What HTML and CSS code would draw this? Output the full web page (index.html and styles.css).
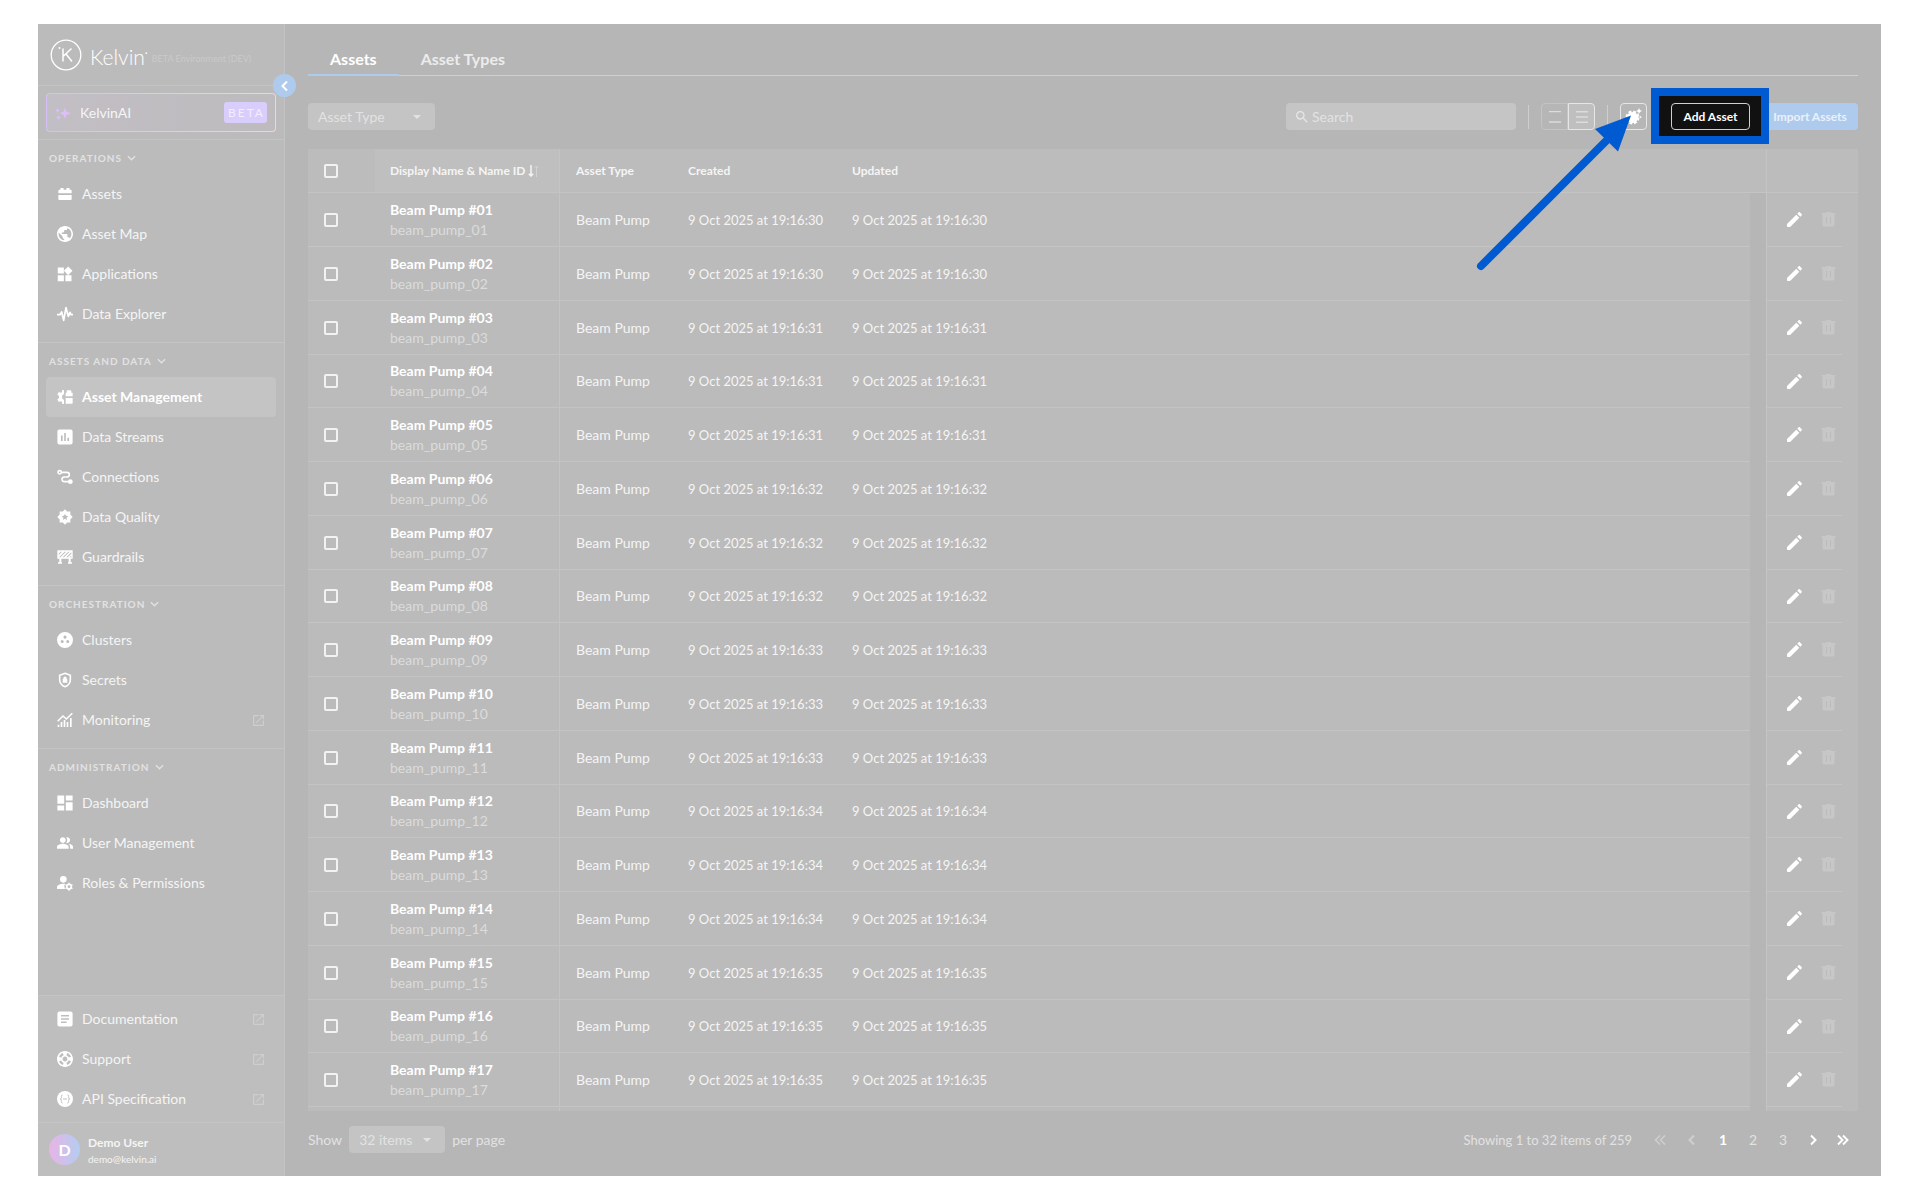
FILE: index.html
```html
<!DOCTYPE html>
<html lang="en">
<head>
  <meta charset="UTF-8" />
  <meta name="viewport" content="width=device-width, initial-scale=1" />
  <title>Kelvin - Assets</title>
  <link rel="stylesheet" href="styles.css">
</head>
<body>
  <svg class="sprite" aria-hidden="true">
    <symbol id="i-assets" viewBox="0 0 24 24"><path d="M2 11V7a1.500 1.500 0 0 1 1.500-1.500H5V4a1 1 0 0 1 1-1h3a1 1 0 0 1 1 1v1.500h4V4a1 1 0 0 1 1-1h3a1 1 0 0 1 1 1v1.500h1.500A1.500 1.500 0 0 1 22 7v4zM2 13.500h20v6a1.500 1.500 0 0 1-1.500 1.500h-17A1.500 1.500 0 0 1 2 19.500z"/></symbol>
    <symbol id="i-globe" viewBox="2 2 20 20"><path d="M12 2C6.480 2 2 6.480 2 12s4.480 10 10 10 10-4.480 10-10S17.520 2 12 2zm-1 17.930c-3.950-.49-7-3.850-7-7.930 0-.62.08-1.210.21-1.790L9 15v1c0 1.100.9 2 2 2v1.930zm6.900-2.540c-.26-.81-1-1.390-1.900-1.390h-1v-3c0-.55-.45-1-1-1H8v-2h2c.55 0 1-.45 1-1V7h2c1.100 0 2-.9 2-2v-.41c2.930 1.190 5 4.060 5 7.410 0 2.080-.8 3.970-2.100 5.390z"/></symbol>
    <symbol id="i-widgets" viewBox="2 1 21 21"><path d="M13 13v8h8v-8h-8zM3 21h8v-8H3v8zM3 3v8h8V3H3zm13.660-1.310L11 7.340 16.660 13l5.660-5.660-5.660-5.650z"/></symbol>
    <symbol id="i-pulse" viewBox="0 0 24 24"><path d="M0 13h4.500l2.500-4L10 21.500l3.500-19 3.500 13 2.500-6L21 13H24" fill="none" stroke="currentColor" stroke-width="2.600" stroke-linejoin="round"/></symbol>
    <symbol id="i-manage" viewBox="0 0 24 24"><path d="M10.500 1.500v6a4.800 4.800 0 0 0 0 9v6H8l-.7-3.200-1.500-.8-3 1L.5 15.700 3 13.500v-3L.5 8.300l2.300-3.800 3 1 1.500-.8L8 1.500zM13 11V5.500h1.500V3.200a1.200 1.200 0 0 1 1.200-1.200h4.600a1.200 1.200 0 0 1 1.200 1.200v2.300H23.500V11zM13 13.500h10.500V21a1 1 0 0 1-1 1H13z"/></symbol>
    <symbol id="i-chart" viewBox="2 2 20 20"><path d="M19 2.500H5A2.500 2.500 0 0 0 2.500 5v14A2.500 2.500 0 0 0 5 21.500h14a2.500 2.500 0 0 0 2.500-2.500V5A2.500 2.500 0 0 0 19 2.500zM9 17H7v-7h2v7zm4 0h-2V7h2v10zm4 0h-2v-4h2v4z"/></symbol>
    <symbol id="i-route" viewBox="0 0 24 24"><g fill="none" stroke="currentColor" stroke-width="2.400"><circle cx="4" cy="5" r="2.500"/><path d="M6.500 5H15a3.500 3.500 0 0 1 0 7h-4a3.500 3.500 0 0 0 0 7h7"/></g><circle cx="20" cy="19" r="3.600"/></symbol>
    <symbol id="i-quality" viewBox="0 0 24 24"><path fill-rule="evenodd" d="M12 .5l3.200 3.200H20v4.500l3.500 3.800-3.500 3.800v4.500h-4.800L12 23.500l-3.200-3.200H4v-4.500L.5 12 4 8.200V3.700h4.800zM12 7l-1.400 3.300-3.600.3 2.700 2.400-.8 3.500L12 14.600l3.100 1.900-.8-3.500 2.700-2.400-3.600-.3z"/></symbol>
    <symbol id="i-guard" viewBox="0 0 24 24"><path fill-rule="evenodd" d="M.5 2h23v12.500h-3V20h2v2h-6v-2h1v-5.500h-11V20h1v2h-6v-2h2v-5.500h-3zM2.500 9l5-5h-2l-3 3zM3 12.500h2L13.500 4h-2zM8.500 12.500h2L19 4h-2zM14 12.500h2l5.500-5.500V5zM19 12.500h2.500V10z"/></symbol>
    <symbol id="i-cluster" viewBox="2 2 20 20"><path fill-rule="evenodd" d="M12 2a10 10 0 1 0 0 20 10 10 0 0 0 0-20zM8.500 15.700a1.900 1.900 0 1 1 0-3.800 1.900 1.900 0 0 1 0 3.800zM12 10.300a1.900 1.900 0 1 1 0-3.800 1.900 1.900 0 0 1 0 3.800zM15.500 15.700a1.900 1.900 0 1 1 0-3.800 1.900 1.900 0 0 1 0 3.800z"/></symbol>
    <symbol id="i-shield" viewBox="1 0 22 24"><path d="M12 2l8 3v6.500c0 5-3.300 8.700-8 10.500-4.700-1.800-8-5.500-8-10.500V5z" fill="none" stroke="currentColor" stroke-width="2.400"/><path d="M8.500 10.500h1V9.300a2.500 2.500 0 0 1 5 0v1.200h1V16h-7z"/></symbol>
    <symbol id="i-monitor" viewBox="0 0 24 24"><path d="M1 14l8-8 5 4.500L23 2" fill="none" stroke="currentColor" stroke-width="2.200"/><path d="M1 19h2.500v3.500H1zM5.500 15H8v7.500H5.500zM10 12h2.500v10.500H10zM14.500 15H17v7.500h-2.500zM19.500 9H22v13.500h-2.500z"/></symbol>
    <symbol id="i-dash" viewBox="2 2 20 20"><path d="M2.500 13h8.500V2.500H2.500V13zm0 8.500h8.500V15H2.500v6.500zm10.500 0h8.500V11H13v10.500zm0-19V9h8.500V2.500H13z"/></symbol>
    <symbol id="i-users" viewBox="1 1 22 22"><path d="M16.670 13.130C18.040 14.060 19 15.320 19 17v3h4v-3c0-2.180-3.570-3.470-6.330-3.870zM15 12c2.210 0 4-1.790 4-4s-1.790-4-4-4c-.47 0-.91.1-1.330.24C14.500 5.270 15 6.580 15 8s-.5 2.730-1.330 3.760c.42.14.86.24 1.330.24zM9 12c2.210 0 4-1.790 4-4s-1.790-4-4-4-4 1.790-4 4 1.790 4 4 4zm0 1c-2.670 0-8 1.340-8 4v3h16v-3c0-2.660-5.330-4-8-4z"/></symbol>
    <symbol id="i-roles" viewBox="0 0 24 24"><circle cx="9.500" cy="6.500" r="5"/><path d="M0 21v-3c0-3 5-5 10-5 .8 0 1.500 0 2.200.1A7 7 0 0 0 12 21z"/><circle cx="18" cy="17.500" r="3.400" fill="none" stroke="currentColor" stroke-width="2.600"/><path d="M18 11.500v12M12.800 14.500l10.400 6M12.800 20.500l10.400-6" stroke="currentColor" stroke-width="2" stroke-dasharray="2.500 7 2.500"/></symbol>
    <symbol id="i-doc" viewBox="2 2 20 20"><path d="M19 2.500H5A2.500 2.500 0 0 0 2.500 5v14A2.500 2.500 0 0 0 5 21.500h14a2.500 2.500 0 0 0 2.500-2.500V5A2.500 2.500 0 0 0 19 2.500zM14 17H7v-2h7v2zm3-4H7v-2h10v2zm0-4H7V7h10v2z"/></symbol>
    <symbol id="i-support" viewBox="2 2 20 20"><path d="M12 2C6.480 2 2 6.480 2 12s4.480 10 10 10 10-4.480 10-10S17.520 2 12 2zm7.460 7.120l-2.780 1.150c-.51-1.360-1.580-2.440-2.950-2.940l1.150-2.780c2.100.8 3.770 2.470 4.580 4.570zM12 15c-1.660 0-3-1.340-3-3s1.340-3 3-3 3 1.340 3 3-1.340 3-3 3zM9.130 4.540l1.170 2.780c-1.380.5-2.470 1.590-2.980 2.970L4.540 9.130c.81-2.110 2.480-3.780 4.590-4.590zM4.540 14.870l2.780-1.150c.51 1.380 1.590 2.460 2.970 2.960l-1.170 2.780c-2.100-.81-3.770-2.480-4.580-4.590zm10.340 4.590l-1.150-2.780c1.370-.51 2.450-1.590 2.950-2.970l2.780 1.170c-.81 2.100-2.480 3.770-4.580 4.580z"/></symbol>
    <symbol id="i-api" viewBox="2 2 20 20"><circle cx="12" cy="12" r="10"/><path d="M9 7c-2 0-1.500 1.500-1.500 3S7 12 6 12c1 0 1.500.5 1.500 2S7 17 9 17M15 7c2 0 1.500 1.500 1.500 3s.5 2 1.500 2c-1 0-1.500.5-1.500 2s.5 3-1.500 3M9.500 12h5" fill="none" stroke="#bdbdbd" stroke-width="1.200"/></symbol>
    <symbol id="i-ext" viewBox="3 3 18 18"><path d="M19 19H5V5h7V3H5a2 2 0 0 0-2 2v14a2 2 0 0 0 2 2h14c1.100 0 2-.9 2-2v-7h-2v7zM14 3v2h3.590l-9.830 9.830 1.410 1.410L19 6.410V10h2V3h-7z"/></symbol>
    <symbol id="i-down" viewBox="0 0 10 6"><path d="M1 1l4 4 4-4" fill="none" stroke="currentColor" stroke-width="1.500"/></symbol>
    <symbol id="i-caret" viewBox="0 0 10 5"><path d="M0 0h10L5 5z"/></symbol>
    <symbol id="i-left" viewBox="0 0 12 12"><path d="M8 1.500L3.500 6 8 10.500" fill="none" stroke="currentColor" stroke-width="2"/></symbol>
    <symbol id="i-first" viewBox="0 0 12 12"><path d="M6 1.500L1.500 6 6 10.500M11 1.500L6.500 6l4.500 4.500" fill="none" stroke="currentColor" stroke-width="1.500"/></symbol>
    <symbol id="i-right" viewBox="0 0 12 12"><path d="M4 1.500L8.500 6 4 10.500" fill="none" stroke="currentColor" stroke-width="2"/></symbol>
    <symbol id="i-last" viewBox="0 0 12 12"><path d="M1 1.500L5.500 6 1 10.500M6 1.500L10.500 6 6 10.500" fill="none" stroke="currentColor" stroke-width="1.900"/></symbol>
    <symbol id="i-spark" viewBox="0 0 16 16"><path d="M10 2.500l1.500 4 4.500 1.700-4.500 1.700-1.500 4-1.500-4L4.500 8.200l4-1.700zM2.500 3l.8 1.700L5 5.500l-1.700.7-.8 1.800-.8-1.800L0 5.500l1.700-.8zM3.500 10l.8 1.700 1.700.8-1.700.7-.8 1.800-.8-1.800-1.700-.7 1.700-.8z"/></symbol>
    <symbol id="i-search" viewBox="3 3 18 18"><path d="M15.500 14h-.79l-.28-.27A6.470 6.470 0 0 0 16 9.500 6.500 6.500 0 1 0 9.500 16c1.610 0 3.090-.59 4.230-1.570l.27.28v.79l5 4.990L20.490 19l-4.990-5zm-6 0C7.010 14 5 11.990 5 9.500S7.010 5 9.500 5 14 7.010 14 9.500 11.990 14 9.500 14z"/></symbol>
    <symbol id="i-two" viewBox="0 0 12 12"><path d="M0 .5h12M0 11h12" stroke="currentColor" stroke-width="1.500"/></symbol>
    <symbol id="i-three" viewBox="0 0 12 12"><path d="M0 .8h12M0 6h12M0 11.200h12" stroke="currentColor" stroke-width="1.500"/></symbol>
    <symbol id="i-gear" viewBox="0 0 17 17"><circle cx="7.500" cy="9.500" r="5.500"/><circle cx="7.500" cy="9.500" r="5.800" fill="none" stroke="currentColor" stroke-width="2.400" stroke-dasharray="2.800 1.755"/><path d="M14 0l.9 2.100 2.100.9-2.100.9L14 6l-.9-2.100L11 3l2.100-.9zM15.500 7.500l.5 1.200 1 .3-1 .5-.5 1-.5-1-1-.5 1-.3z"/></symbol>
    <symbol id="i-sort" viewBox="0 0 11 12"><path d="M3 0v11M.8 8.800L3 11l2.200-2.200" fill="none" stroke="currentColor" stroke-width="1.500"/><path d="M8.500 12V1M6.500 3l2-2 2 2" fill="none" stroke="#d2d2d2"/></symbol>
    <symbol id="i-edit" viewBox="3 3 18 18"><path d="M3 17.300V20q0 1 1 1h2.700L17.800 9.900l-3.700-3.700zM20.700 7c.4-.4.4-1 0-1.400l-2.300-2.300c-.4-.4-1-.4-1.400 0l-1.700 1.700 3.700 3.700z"/></symbol>
    <symbol id="i-trash" viewBox="0 0 14 15"><path fill-rule="evenodd" d="M0 1h4l1-1h4l1 1h4v1.500h-1V13a1.500 1.500 0 0 1-1.500 1.500h-9A1.500 1.500 0 0 1 1 13V2.500H0zM4.500 5v6.500h1V5zM8.500 5v6.500h1V5z"/></symbol>
  </svg>

  <div class="app">
    <aside class="sidebar">
      <div class="brand">
        <svg class="brand-mark" viewBox="0 0 32 32"><g fill="none" stroke="#fff"><circle cx="16" cy="16" r="14.800" stroke-width="1.300"/><path d="M13 9.500v13M21.500 9.500L13 17.500M16 15l6 7.500" stroke-width="1.500"/></g><circle cx="9.500" cy="9" r="1" fill="#fff"/></svg>
        <span class="brand-name">Kelvin<sup>•</sup></span>
        <span class="brand-env">BETA Environment (DEV)</span>
      </div>
      <div class="ai">
        <a class="ai-link" href="#"><svg class="icon"><use href="#i-spark"/></svg><span>KelvinAI</span><b class="beta">BETA</b></a>
      </div>

      <nav class="menu">
        <section class="group">
          <button class="group-title">OPERATIONS <svg><use href="#i-down"/></svg></button>
          <a class="item" href="#"><svg class="icon"><use href="#i-assets"/></svg><span>Assets</span></a>
          <a class="item" href="#"><svg class="icon"><use href="#i-globe"/></svg><span>Asset Map</span></a>
          <a class="item" href="#"><svg class="icon"><use href="#i-widgets"/></svg><span>Applications</span></a>
          <a class="item" href="#"><svg class="icon"><use href="#i-pulse"/></svg><span>Data Explorer</span></a>
        </section>
        <section class="group">
          <button class="group-title">ASSETS AND DATA <svg><use href="#i-down"/></svg></button>
          <a class="item active" href="#"><svg class="icon"><use href="#i-manage"/></svg><span>Asset Management</span></a>
          <a class="item" href="#"><svg class="icon"><use href="#i-chart"/></svg><span>Data Streams</span></a>
          <a class="item" href="#"><svg class="icon"><use href="#i-route"/></svg><span>Connections</span></a>
          <a class="item" href="#"><svg class="icon"><use href="#i-quality"/></svg><span>Data Quality</span></a>
          <a class="item" href="#"><svg class="icon"><use href="#i-guard"/></svg><span>Guardrails</span></a>
        </section>
        <section class="group">
          <button class="group-title">ORCHESTRATION <svg><use href="#i-down"/></svg></button>
          <a class="item" href="#"><svg class="icon"><use href="#i-cluster"/></svg><span>Clusters</span></a>
          <a class="item" href="#"><svg class="icon"><use href="#i-shield"/></svg><span>Secrets</span></a>
          <a class="item" href="#"><svg class="icon"><use href="#i-monitor"/></svg><span>Monitoring</span><svg class="ext"><use href="#i-ext"/></svg></a>
        </section>
        <section class="group">
          <button class="group-title">ADMINISTRATION <svg><use href="#i-down"/></svg></button>
          <a class="item" href="#"><svg class="icon"><use href="#i-dash"/></svg><span>Dashboard</span></a>
          <a class="item" href="#"><svg class="icon"><use href="#i-users"/></svg><span>User Management</span></a>
          <a class="item" href="#"><svg class="icon"><use href="#i-roles"/></svg><span>Roles &amp; Permissions</span></a>
        </section>
      </nav>

      <div class="help">
        <a class="item" href="#"><svg class="icon"><use href="#i-doc"/></svg><span>Documentation</span><svg class="ext"><use href="#i-ext"/></svg></a>
        <a class="item" href="#"><svg class="icon"><use href="#i-support"/></svg><span>Support</span><svg class="ext"><use href="#i-ext"/></svg></a>
        <a class="item" href="#"><svg class="icon"><use href="#i-api"/></svg><span>API Specification</span><svg class="ext"><use href="#i-ext"/></svg></a>
      </div>
      <div class="user">
        <span class="avatar">D</span>
        <div>
          <div class="user-name">Demo User</div>
          <div class="user-mail">demo@kelvin.ai</div>
        </div>
      </div>
      <button class="collapse" aria-label="Collapse menu"><svg><use href="#i-left"/></svg></button>
    </aside>

    <main class="main">
      <nav class="tabs">
        <a class="tab active" href="#">Assets</a>
        <a class="tab" href="#">Asset Types</a>
      </nav>

      <div class="toolbar">
        <div class="select">
          <select class="select-type" aria-label="Asset Type"><option>Asset Type</option></select>
          <svg><use href="#i-caret"/></svg>
        </div>
        <div class="tools">
          <label class="search"><svg><use href="#i-search"/></svg><input type="text" placeholder="Search" aria-label="Search"></label>
          <i class="divider"></i>
          <div class="toggle">
            <button aria-label="Compact rows"><svg><use href="#i-two"/></svg></button>
            <button class="on" aria-label="Full rows"><svg><use href="#i-three"/></svg></button>
          </div>
          <i class="divider"></i>
          <button class="square" aria-label="Table settings"><svg><use href="#i-gear"/></svg></button>
          <div class="spotlight">
            <button class="btn-outline">Add Asset</button>
            <svg class="arrow" viewBox="0 0 160 160"><path d="M6 154L134 26" stroke="#005bd3" stroke-width="8" stroke-linecap="round"/><path d="M156 3.500L120 17l23 22.500z" fill="#005bd3"/></svg>
          </div>
          <button class="btn-primary">Import Assets</button>
        </div>
      </div>

      <div class="table-wrap">
        <table class="table">
          <colgroup>
            <col class="c-check"><col class="c-name"><col class="c-type"><col class="c-date"><col class="c-fill"><col class="c-gap"><col class="c-act"><col class="c-gap">
          </colgroup>
          <thead>
            <tr>
              <th class="check"><input type="checkbox" aria-label="Select all"></th>
              <th class="name sorted">Display Name &amp; Name ID <svg class="sort"><use href="#i-sort"/></svg></th>
              <th>Asset Type</th>
              <th>Created</th>
              <th>Updated</th>
              <th></th>
              <th class="actions"></th>
              <th></th>
            </tr>
          </thead>
          <tbody id="rows"></tbody>
        </table>
      </div>

      <footer class="footer">
        <label for="size">Show</label>
        <div class="select">
          <select class="select-size" id="size"><option>32 items</option></select>
          <svg><use href="#i-caret"/></svg>
        </div>
        <span>per page</span>
        <span class="total">Showing 1 to 32 items of 259</span>
        <nav class="pager">
          <button class="off" aria-label="First page"><svg><use href="#i-first"/></svg></button>
          <button class="off" aria-label="Previous page"><svg><use href="#i-left"/></svg></button>
          <button class="current">1</button>
          <button>2</button>
          <button>3</button>
          <button class="step" aria-label="Next page"><svg><use href="#i-right"/></svg></button>
          <button class="step" aria-label="Last page"><svg><use href="#i-last"/></svg></button>
        </nav>
      </footer>
    </main>
  </div>

  <script>
    // seconds part of the timestamps, one per asset
    const seconds = [30, 30, 31, 31, 31, 32, 32, 32, 33, 33, 33, 34, 34, 34, 35, 35, 35];

    const rows = seconds.map((s, i) => {
      const n = String(i + 1).padStart(2, '0');
      const date = `9 Oct 2025 at 19:16:${s}`;
      return `<tr>
        <td class="check"><input type="checkbox" aria-label="Select Beam Pump #${n}"></td>
        <td class="name"><strong>Beam Pump #${n}</strong><span>beam_pump_${n}</span></td>
        <td>Beam Pump</td>
        <td class="date">${date}</td>
        <td class="date">${date}</td>
        <td class="gutter"></td>
        <td class="actions"><div>
          <button aria-label="Edit"><svg><use href="#i-edit"/></svg></button>
          <button class="trash" aria-label="Delete" disabled><svg><use href="#i-trash"/></svg></button>
        </div></td>
        <td class="edge"></td>
      </tr>`;
    });

    rows.push('<tr><td></td><td class="name"></td><td></td><td></td><td></td><td class="gutter"></td><td class="actions"></td><td class="edge"></td></tr>');

    document.getElementById('rows').innerHTML = rows.join('');
  </script>
</body>
</html>
```
FILE: styles.css
```css
* {
  margin: 0;
  padding: 0;
  box-sizing: border-box;
}

body {
  background: #fff;
  color: #f5f5f5;
  font-family: Lato, "Liberation Sans", sans-serif;
  font-size: 14px;
  line-height: 20px;
}

a {
  color: inherit;
  text-decoration: none;
}

button, input, select {
  font: inherit;
  color: inherit;
  background: none;
  border: 0;
}

button {
  cursor: pointer;
}

svg {
  display: block;
  fill: currentColor;
  flex: none;
}

.sprite {
  display: none;
}

.app {
  display: flex;
  height: calc(100vh - 48px);
  margin: 24px 39px 24px 38px;
  background: #b6b6b6;
}

/* sidebar */
.sidebar {
  position: relative;
  display: flex;
  flex-direction: column;
  flex: none;
  width: 247px;
  background: #bbb;
  border-right: 1px solid #c3c3c3;
}

.brand {
  display: flex;
  align-items: center;
  height: 62px;
  padding: 0 12px;
  border-bottom: 1px solid #c4c4c4;
}

.brand-mark {
  width: 32px;
  height: 32px;
}

.brand-name {
  margin-left: 8px;
  color: #fff;
  font-size: 21px;
  font-weight: 300;
}

.brand-env {
  margin: 8px 0 0 4px;
  color: #cacaca;
  font-size: 9px;
  line-height: 12px;
  white-space: nowrap;
}

.brand-name sup {
  font-size: 5px;
  vertical-align: 10px;
}

.ai {
  padding: 7px 8px;
  border-bottom: 1px solid #c4c4c4;
}

.ai-link {
  display: flex;
  align-items: center;
  height: 39px;
  padding: 0 8px;
  border: 1px solid transparent;
  border-radius: 4px;
  background: linear-gradient(90deg, #c2bec5, #bdbbbd) padding-box, linear-gradient(90deg, #d5bff5, #ecd3e6) border-box;
}

.ai-link .icon {
  color: #dabff8;
}

.beta {
  margin-left: auto;
  padding: 0 2px 0 4px;
  border-radius: 3px;
  background: #d9cdfc;
  color: #f2edff;
  font-size: 12px;
  font-weight: 400;
  line-height: 21px;
  letter-spacing: 2px;
}

.icon {
  width: 16px;
  height: 16px;
  margin-right: 9px;
  color: #fff;
}

.menu {
  flex: 1;
  min-height: 0;
}

.group {
  padding: 0 8px 8px;
}

.group + .group {
  border-top: 1px solid #c4c4c4;
}

.group-title {
  display: flex;
  align-items: center;
  height: 34px;
  padding: 2px 3px 0;
  color: #e2e2e2;
  font-size: 10px;
  font-weight: 700;
  letter-spacing: 1px;
}

.group-title svg {
  width: 9px;
  height: 6px;
  margin-left: 5px;
}

.item {
  display: flex;
  align-items: center;
  height: 40px;
  padding: 0 12px 0 11px;
  border-radius: 4px;
}

.item.active {
  background: #c4c4c4;
  color: #fff;
  font-weight: 700;
}

.ext {
  width: 11px;
  height: 11px;
  margin-left: auto;
  color: #cecece;
}

.help {
  padding: 3px 8px;
  border-top: 1px solid #c4c4c4;
  background: #bebebe;
}

.user {
  display: flex;
  align-items: center;
  height: 54px;
  padding: 0 11px;
  border-top: 1px solid #c4c4c4;
  background: #bebebe;
}

.avatar {
  width: 31px;
  margin-right: 8px;
  border-radius: 50%;
  background: linear-gradient(90deg, #e8b4e6, #b3cdf0);
  color: #fff;
  font-size: 16px;
  font-weight: 700;
  line-height: 31px;
  text-align: center;
}

.user-name {
  font-size: 12px;
  font-weight: 700;
  line-height: 18px;
}

.user-mail {
  font-size: 10px;
  line-height: 14px;
}

.collapse {
  position: absolute;
  top: 50px;
  right: -12px;
  display: grid;
  place-items: center;
  width: 23px;
  height: 23px;
  border-radius: 50%;
  background: #aecbed;
  color: #fff;
}

.collapse svg {
  width: 12px;
  height: 12px;
}

/* main column */
.main {
  display: flex;
  flex-direction: column;
  flex: 1;
  min-width: 0;
  padding: 0 23px;
}

.tabs {
  display: flex;
  height: 52px;
  border-bottom: 1px solid #d0d0d0;
}

.tab {
  height: 52px;
  padding: 25px 22px 0;
  color: #ececec;
  font-size: 16px;
  font-weight: 700;
}

.tab.active {
  border-bottom: 2px solid #aecbed;
  color: #fff;
}

.toolbar {
  display: flex;
  align-items: center;
  justify-content: space-between;
  height: 27px;
  margin: 27px 0 19px;
}

.select {
  display: grid;
  align-items: center;
  color: #e2e2e2;
}

.select select {
  grid-area: 1 / 1;
  height: 27px;
  padding: 0 10px;
  border-radius: 4px;
  background: #c4c4c4;
  appearance: none;
}

.select-type {
  width: 127px;
}

.select-size {
  width: 96px;
}

.select svg {
  grid-area: 1 / 1;
  justify-self: end;
  width: 8px;
  height: 4px;
  margin-right: 14px;
  pointer-events: none;
}

.tools {
  display: flex;
  align-items: center;
  gap: 12px;
}

.search {
  display: flex;
  align-items: center;
  width: 230px;
  height: 27px;
  padding: 0 10px;
  border-radius: 4px;
  background: #c5c5c5;
  color: #e6e6e6;
}

.search svg {
  width: 12px;
  height: 12px;
  margin-right: 4px;
}

.search input {
  width: 100%;
}

.search input::placeholder {
  color: #e2e2e2;
}

.divider {
  width: 1px;
  height: 24px;
  background: #cfcfcf;
}

.toggle {
  display: flex;
  color: #dcdcdc;
}

.toggle button, .square {
  display: grid;
  place-items: center;
  width: 27px;
  height: 27px;
  border: 1px solid #c4c4c4;
  border-radius: 4px 0 0 4px;
}

.toggle .on {
  border-color: #e6e6e6;
  border-radius: 0 4px 4px 0;
  background: #bfbfbf;
}

.toggle svg {
  width: 12px;
  height: 12px;
}

.square {
  border-color: #e6e6e6;
  border-radius: 4px;
  color: #fff;
}

.square svg {
  width: 17px;
  height: 17px;
}

/* dark frame round the button that the guide points at */
.spotlight {
  position: relative;
  z-index: 1;
  margin-left: 12px;
}

.spotlight::before {
  content: "";
  position: absolute;
  inset: -15px -19px -14px -20px;
  border: 8px solid #005bd3;
  background: #111;
}

.btn-outline, .btn-primary {
  height: 27px;
  border-radius: 4px;
  font-size: 12px;
  font-weight: 700;
}

.btn-outline {
  position: relative;
  display: block;
  width: 79px;
  border: 1px solid #d0d0d0;
  color: #fff;
}

.btn-primary {
  width: 96px;
  background: #aecbed;
  color: #e9f1fb;
}

.arrow {
  position: absolute;
  right: 115px;
  top: 9px;
  width: 160px;
  height: 160px;
}

/* table */
.table-wrap {
  flex: 1;
  min-height: 0;
  overflow: hidden;
}

.table {
  width: 100%;
  table-layout: fixed;
  border-spacing: 0;
}

.c-check { width: 67px; }
.c-name { width: 185px; }
.c-type { width: 112px; }
.c-date { width: 164px; }
.c-gap { width: 16px; }
.c-act { width: 76px; }

.table th, .table td {
  border-bottom: 1px solid #c4c4c4;
  background: #bbb;
  text-align: left;
  white-space: nowrap;
}

.table th {
  height: 44px;
  padding: 0 0 0 16px;
  background: #bcbcbc;
  font-size: 12px;
}

.table td {
  height: 54px;
  padding: 0 0 0 16px;
}

.table tr:nth-child(4n) td {
  height: 53px;
}

.table .name {
  padding-left: 15px;
  border-right: 1px solid #c4c4c4;
}

.table .sorted {
  background: #bfbfbf;
}

.table .date {
  font-size: 13px;
}

.table .gutter {
  border-bottom: 0;
  background: #b6b6b6;
}

.table .actions {
  padding: 0;
  border-left: 1px solid #c4c4c4;
}

.table .edge {
  border-bottom: 0;
}

.name strong, .name span {
  display: block;
}

.name strong {
  color: #fff;
}

.name span {
  color: #dcdcdc;
}

.sort {
  display: inline-block;
  width: 11px;
  height: 12px;
  vertical-align: -2px;
}

.check input {
  display: block;
  width: 14px;
  height: 14px;
  border: 2px solid #f2f2f2;
  border-radius: 2px;
  appearance: none;
}

.actions div {
  display: flex;
  align-items: center;
  gap: 19px;
  padding-left: 20px;
  color: #fff;
}

.actions svg {
  width: 15px;
  height: 15px;
}

.actions .trash {
  color: #c7c7c7;
}

/* footer */
.footer {
  display: flex;
  align-items: center;
  gap: 7px;
  height: 65px;
  padding-bottom: 8px;
  color: #e2e2e2;
}

.total {
  margin-left: auto;
  font-size: 13px;
}

.pager {
  display: flex;
  margin-left: 5px;
}

.pager button {
  display: grid;
  place-items: center;
  width: 30px;
  height: 27px;
}

.pager svg {
  width: 12px;
  height: 12px;
}

.pager .off {
  width: 32px;
  color: #cfcfcf;
}

.pager .current {
  color: #fff;
  font-weight: 700;
}

.pager .step {
  color: #fff;
}
```
